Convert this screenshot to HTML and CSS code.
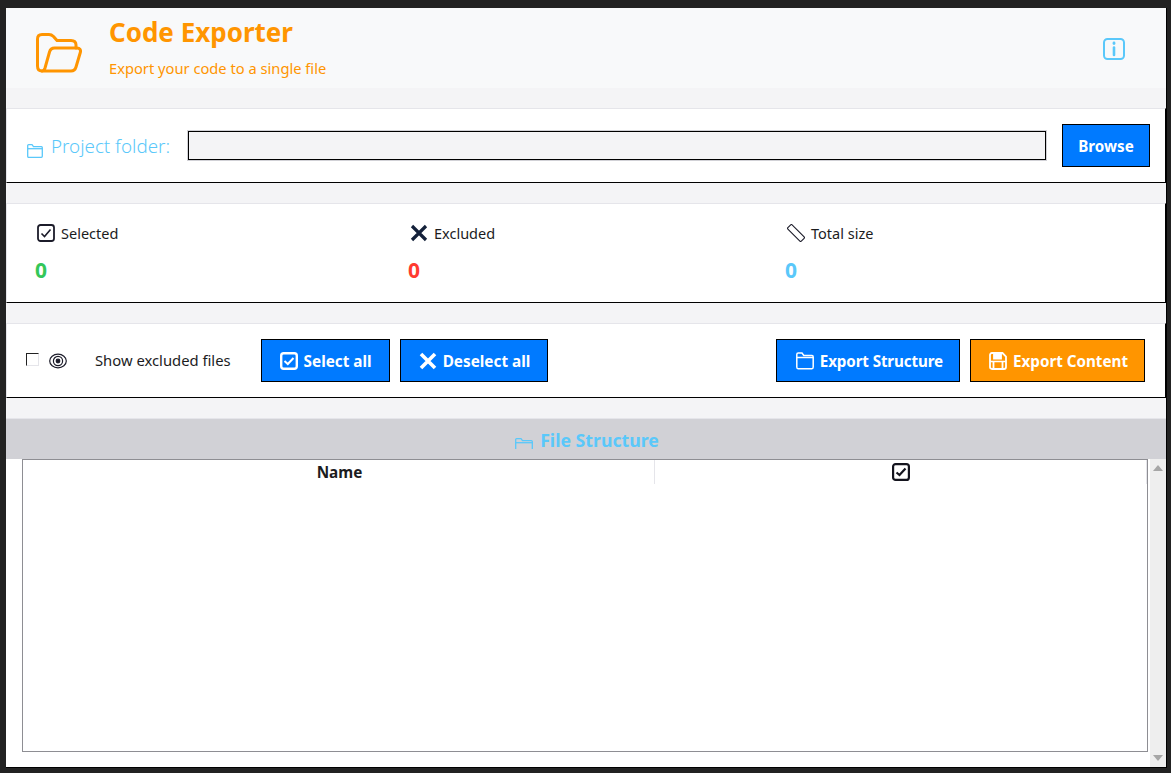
FILE: index.html
```html
<!DOCTYPE html>
<html lang="en">
<head>
    <meta charset="UTF-8">
    <title>Code Exporter</title>
    <link rel="stylesheet" href="styles.css">
</head>
<body>
    <div class="window">
        <header class="app-header">
            <svg class="logo" viewBox="0 0 46 40" fill="none" stroke="#ff9500" stroke-width="3" stroke-linejoin="round" stroke-linecap="round">
                <path d="M6 38C3 38 1.500 36 1.500 33V6C1.500 3 3 1.500 6 1.500H13C15 1.500 16 2 17.500 3.500L21 7.500H35C38 7.500 40 9 40 12V15"/>
                <path d="M6 38C8 38 8.500 36.500 9 35L13.500 19C14.200 16.500 15.500 15 18.500 15H41C44 15 45 17 44.300 19.500L40 34C39.200 36.800 37.500 38 35 38Z"/>
            </svg>
            <div class="titles">
                <h1>Code Exporter</h1>
                <p>Export your code to a single file</p>
            </div>
            <svg class="info" viewBox="0 0 22 22" fill="none" stroke="#5ac8fa">
                <rect x="1" y="1" width="20" height="20" rx="3.500" stroke-width="2"/>
                <path d="M11 9.500V17" stroke-width="2.600" stroke-linecap="round"/>
                <path d="M11 5V5.600" stroke-width="2.800" stroke-linecap="round"/>
            </svg>
        </header>

        <section class="card folder-row">
            <svg class="folder-icon" viewBox="0 0 16 14" fill="none" stroke="#5ac8fa" stroke-width="1.300">
                <path d="M.7 12V1.700C.7 1 1 .7 1.700 .7H5L6.500 2.700H14.500C15 2.700 15.300 3 15.300 3.700V12.300C15.300 13 15 13.300 14.300 13.300H1.700C1 13.300 .7 13 .7 12Z"/>
                <path d="M.7 4.700H15.300"/>
            </svg>
            <label class="folder-label">Project folder:</label>
            <input class="folder-input" type="text">
            <button class="btn browse">Browse</button>
        </section>

        <section class="card stats">
            <div class="stat">
                <div class="stat-title">
                    <svg class="stat-icon" viewBox="0 0 18 18" fill="none" stroke="#1c1c2a">
                        <rect x="1" y="1" width="16" height="16" rx="2.500" stroke-width="1.800"/>
                        <path d="M4.500 9.500L7.500 12.500L13.500 5.500" stroke-width="1.600"/>
                    </svg>
                    <span>Selected</span>
                </div>
                <div class="stat-value green">0</div>
            </div>
            <div class="stat">
                <div class="stat-title">
                    <svg class="stat-icon" viewBox="0 0 18 18" fill="none" stroke="#14213a" stroke-width="3.200">
                        <path d="M2 2L16 16M16 2L2 16"/>
                    </svg>
                    <span>Excluded</span>
                </div>
                <div class="stat-value red">0</div>
            </div>
            <div class="stat">
                <div class="stat-title">
                    <svg class="stat-icon" viewBox="0 0 18 18" fill="none" stroke="#1c1c2a" stroke-width="1.100">
                        <rect x="-.5" y="6" width="19" height="6" rx="1" transform="rotate(45 9 9)"/>
                    </svg>
                    <span>Total size</span>
                </div>
                <div class="stat-value teal">0</div>
            </div>
        </section>

        <section class="card actions">
            <span class="check"></span>
            <svg class="eye" viewBox="0 0 18 16" fill="none" stroke="#1c1c2a" stroke-width="1.200">
                <ellipse cx="9" cy="8" rx="8.300" ry="6.800"/>
                <circle cx="9" cy="8" r="4.600"/>
                <circle cx="9" cy="8" r="1.800" fill="#1c1c2a"/>
            </svg>
            <span class="show-label">Show excluded files</span>
            <button class="btn btn-select">
                <svg class="btn-icon" viewBox="0 0 18 18" fill="none" stroke="#fff">
                    <rect x="1.200" y="1.200" width="15.600" height="15.600" rx="2.500" stroke-width="2.400"/>
                    <path d="M4.500 9L7.800 12L13.500 6" stroke-width="2"/>
                </svg>
                Select all
            </button>
            <button class="btn btn-select">
                <svg class="btn-icon" viewBox="0 0 18 18" fill="none" stroke="#fff" stroke-width="3.600">
                    <path d="M2 2L16 16M16 2L2 16"/>
                </svg>
                Deselect all
            </button>
            <button class="btn btn-structure">
                <svg class="btn-icon" viewBox="0 0 18 18" fill="none" stroke="#fff" stroke-width="1.500">
                    <path d="M.8 15V2.500C.8 1.500 1.200 1 2.200 1H6L7.800 3.500H16C17 3.500 17.200 4 17.200 5V15C17.200 16 16.800 16.700 16 16.700H2C1.200 16.700 .8 16 .8 15Z"/>
                    <path d="M.8 5.500H17.200"/>
                </svg>
                Export Structure
            </button>
            <button class="btn orange">
                <svg class="btn-icon" viewBox="0 0 18 18" fill="none" stroke="#fff" stroke-width="1.800">
                    <path d="M1 3C1 1.700 1.700 1 3 1H13.500L17 4.500V15C17 16.300 16.300 17 15 17H3C1.700 17 1 16.300 1 15Z"/>
                    <path d="M1 9.500H17" stroke-width="1.500"/>
                    <path d="M5 1.500V6.500H12V1.500" fill="#fff"/>
                    <path d="M4.500 10V16.500M13.500 10V16.500"/>
                </svg>
                Export Content
            </button>
        </section>

        <div class="files-heading">
            <svg class="files-icon" viewBox="0 0 18 11" fill="none" stroke="#5ac8fa" stroke-width="1.300">
                <path d="M.7 11V1.600C.7 1 1 .7 1.600 .7H6L7.500 2.700H16.400C17 2.700 17.300 3 17.300 3.600V11"/>
                <path d="M.7 4.700H17.300"/>
            </svg>
            <h2>File Structure</h2>
        </div>

        <div class="files-body">
            <div class="file-table">
                <div class="file-head">
                    <div class="col-name">Name</div>
                    <div class="col-check">
                        <svg class="head-check" viewBox="0 0 18 18" fill="none" stroke="#14141e">
                            <rect x="1.100" y="1.100" width="15.800" height="15.800" rx="2.500" stroke-width="2.200"/>
                            <path d="M4.500 9.500L7.500 12L13.500 5.500" stroke-width="2.200"/>
                        </svg>
                    </div>
                </div>
            </div>
            <div class="scrollbar">
                <span class="arrow up"></span>
                <span class="arrow down"></span>
            </div>
        </div>
    </div>
</body>
</html>
```

FILE: styles.css
```css
html, body {
    height: 100%;
}
body {
    margin: 0;
    padding: 8px 4px 5px 6px;
    box-sizing: border-box;
    background-color: #222222;
    font-family: "Noto Sans", sans-serif;
    font-size: 14.5px;
    color: #1c1c1e;
    overflow: hidden;
}
.window {
    height: 100%;
    box-sizing: border-box;
    display: flex;
    flex-direction: column;
    background-color: #f4f4f6;
    border-right: 1px solid #000;
    border-bottom: 1px solid #000;
}
.app-header {
    height: 80px;
    flex: none;
    display: flex;
    align-items: center;
    padding: 0 41px 0 30px;
    background-color: #f8f9fa;
}
.logo {
    width: 46px;
    height: 40px;
    margin-top: 9px;
    margin-right: 27px;
}
.titles {
    flex: 1;
    align-self: flex-start;
    padding-top: 6px;
}
h1 {
    margin: 0;
    font-size: 26px;
    line-height: 36px;
    font-weight: 700;
    color: #ff9500;
}
.titles p {
    margin: 8px 0 0;
    font-size: 14.7px;
    line-height: 20px;
    color: #ff9500;
}
.info {
    width: 22px;
    height: 22px;
    margin-top: 1px;
}
.card {
    flex: none;
    margin-top: 20px;
    box-sizing: border-box;
    display: flex;
    background-color: #fff;
    border-top: 1px solid #e5e5ea;
    border-left: 1px solid #e5e5ea;
    border-right: 1px solid #000;
    border-bottom: 1px solid #000;
}
.btn {
    display: flex;
    align-items: center;
    justify-content: center;
    gap: 6px;
    height: 43px;
    padding: 0 16px 0 18px;
    box-sizing: border-box;
    background-color: #007aff;
    color: #fff;
    border: 1px solid #000;
    font-family: inherit;
    font-size: 15.2px;
    font-weight: 700;
    white-space: nowrap;
    cursor: pointer;
}
.btn.orange {
    background-color: #ff9500;
}
.btn-select {
    font-size: 15.3px;
    padding-right: 17px;
}
.btn-structure {
    margin-left: auto;
    padding-left: 19px;
    letter-spacing: -.12px;
}
.btn-icon {
    width: 18px;
    height: 18px;
    flex: none;
}

.folder-row {
    height: 75px;
    align-items: center;
    padding: 0 15px 0 20px;
}
.folder-icon {
    width: 16px;
    height: 14px;
    margin-top: 11px;
    margin-right: 8px;
    flex: none;
}
.folder-label {
    width: 137px;
    flex: none;
    font-size: 18.8px;
    font-weight: 300;
    color: #5ac8fa;
}
.folder-input {
    flex: 1;
    height: 29px;
    margin-right: 16px;
    box-sizing: border-box;
    background-color: #f4f4f6;
    border: 1px solid #000;
    outline: 1px solid #d1d1d6;
}
.browse {
    width: 88px;
    padding: 0;
}

.stats {
    height: 100px;
    display: grid;
    grid-template-columns: 373px 377px 1fr;
    padding: 18px 0 0 28px;
}
.stat-title {
    display: flex;
    align-items: center;
    gap: 6px;
    padding-left: 2px;
    height: 22px;
}
.stat-icon {
    width: 18px;
    height: 18px;
    flex: none;
}
.stat-value {
    margin-top: 13px;
    font-size: 21px;
    line-height: 26px;
    font-weight: 700;
}
.green {
    color: #34c759;
}
.red {
    color: #ff3b30;
}
.teal {
    color: #5ac8fa;
}

.actions {
    height: 75px;
    align-items: center;
    padding: 0 20px 0 19px;
    gap: 10px;
}
.check {
    width: 11px;
    height: 11px;
    flex: none;
    margin-bottom: 2px;
    background-color: #fff;
    border: 1px solid #e5e5ea;
    border-top-color: #222;
    border-left-color: #222;
}
.eye {
    width: 18px;
    height: 16px;
    flex: none;
}
.show-label {
    margin-left: 18px;
    margin-right: 20px;
    margin-bottom: 2px;
    font-size: 14.8px;
    white-space: nowrap;
}

.files-heading {
    flex: none;
    height: 41px;
    margin-top: 20px;
    padding: 2px 0 0 2px;
    box-sizing: border-box;
    display: flex;
    align-items: center;
    justify-content: center;
    gap: 7px;
    background-color: #d1d1d6;
    border-top: 1px solid #e5e5ea;
}
h2 {
    margin: 0;
    font-size: 17.7px;
    font-weight: 700;
    color: #5ac8fa;
}
.files-icon {
    width: 18px;
    height: 11px;
    margin-top: 6px;
}
.files-body {
    flex: 1;
    min-height: 0;
    display: flex;
    background-color: #fff;
    padding-left: 16px;
}
.file-table {
    flex: 1;
    margin-bottom: 15px;
    border: 1px solid #8e8e93;
    margin-right: 2px;
}
.file-head {
    display: flex;
    height: 24px;
    font-weight: 700;
    font-size: 15.3px;
}
.col-name, .col-check {
    display: flex;
    align-items: center;
    justify-content: center;
    box-sizing: border-box;
    border-right: 1px solid #e5e5ea;
}
.col-name {
    width: 632px;
    flex: none;
    padding-left: 2px;
}
.col-check {
    flex: 1;
}
.head-check {
    width: 18px;
    height: 18px;
}
.scrollbar {
    width: 16px;
    flex: none;
    display: flex;
    flex-direction: column;
    justify-content: space-between;
    align-items: center;
    padding: 6px 0;
    box-sizing: border-box;
    background-color: #eeeeee;
}
.arrow {
    width: 0;
    height: 0;
    border-left: 5px solid transparent;
    border-right: 5px solid transparent;
}
.arrow.up {
    border-bottom: 6px solid #a6a6a6;
}
.arrow.down {
    border-top: 6px solid #a6a6a6;
}
```
